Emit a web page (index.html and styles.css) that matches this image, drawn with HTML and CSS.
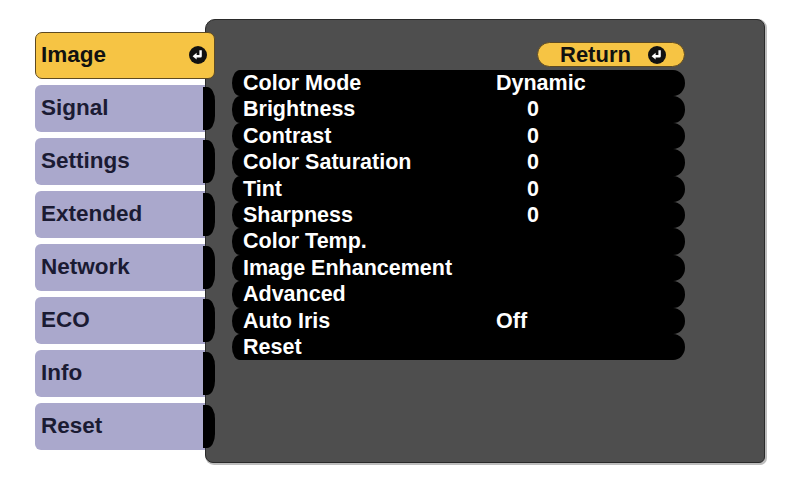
FILE: index.html
```html
<!DOCTYPE html>
<html lang="en">
<head>
<meta charset="utf-8">
<title>Image menu</title>
<link rel="stylesheet" href="styles.css">
</head>
<body>
<div class="screen">
  <nav class="tabs">
    <div class="tab active">
      <span>Image</span>
      <svg class="enter" viewBox="0 0 18 18" width="18" height="18" aria-hidden="true">
        <circle cx="9" cy="9" r="9" fill="#111"/>
        <path d="M11.6 4.2 V10.2 H7" fill="none" stroke="#fff" stroke-width="2.4" stroke-linejoin="round"/>
        <path d="M3.6 10.2 L7.6 6.8 L7.6 13.6 Z" fill="#fff"/>
      </svg>
    </div>
    <div class="tab">Signal</div>
    <div class="tab">Settings</div>
    <div class="tab">Extended</div>
    <div class="tab">Network</div>
    <div class="tab">ECO</div>
    <div class="tab">Info</div>
    <div class="tab">Reset</div>
  </nav>

  <section class="panel">
    <div class="menu">
      <div class="return">
        <span>Return</span>
        <svg class="enter" viewBox="0 0 18 18" width="18" height="18" aria-hidden="true">
          <circle cx="9" cy="9" r="9" fill="#111"/>
          <path d="M11.6 4.2 V10.2 H7" fill="none" stroke="#fff" stroke-width="2.4" stroke-linejoin="round"/>
          <path d="M3.6 10.2 L7.6 6.8 L7.6 13.6 Z" fill="#fff"/>
        </svg>
      </div>
      <ul class="rows">
        <li class="row"><span class="label">Color Mode</span><span class="value">Dynamic</span></li>
        <li class="row"><span class="label">Brightness</span><span class="value num">0</span></li>
        <li class="row"><span class="label">Contrast</span><span class="value num">0</span></li>
        <li class="row"><span class="label">Color Saturation</span><span class="value num">0</span></li>
        <li class="row"><span class="label">Tint</span><span class="value num">0</span></li>
        <li class="row"><span class="label">Sharpness</span><span class="value num">0</span></li>
        <li class="row"><span class="label">Color Temp.</span></li>
        <li class="row"><span class="label">Image Enhancement</span></li>
        <li class="row"><span class="label">Advanced</span></li>
        <li class="row"><span class="label">Auto Iris</span><span class="value">Off</span></li>
        <li class="row"><span class="label">Reset</span></li>
      </ul>
    </div>
  </section>
</div>
</body>
</html>
```
FILE: styles.css
```css
html, body {
  margin: 0;
  background: #fff;
}

body {
  width: 800px;
  height: 484px;
  overflow: hidden;
  font-family: "Liberation Sans", Arial, sans-serif;
  font-weight: bold;
  font-size: 21.5px;
}

.screen {
  display: flex;
  align-items: flex-start;
  padding: 19px 0 0 35px;
}

/* ---- left menu tabs ---- */
.tabs {
  display: flex;
  flex-direction: column;
  gap: 6.5px;
  width: 170px;
  margin-top: 13px;
  position: relative;
  z-index: 1;
}

.tab {
  position: relative;
  box-sizing: border-box;
  height: 46.5px;
  display: flex;
  align-items: center;
  padding-left: 6px;
  background: #aaa8cc;
  color: #1b1b33;
  font-size: 22.5px;
  border-radius: 6px 0 0 6px;
}

/* black bracket joining each tab to the panel edge */
.tab::after {
  content: "";
  position: absolute;
  top: 2px;
  bottom: 2px;
  left: 168px;
  width: 12px;
  background: #000;
  border-radius: 0 8px 8px 0 / 0 14px 14px 0;
}

.tab.active {
  width: 180px;
  padding: 0 7px 0 5px;
  justify-content: space-between;
  background: #f6c444;
  border: 1.5px solid #5e4a22;
  border-radius: 7px;
  color: #111;
}

.tab.active::after {
  display: none;
}

.enter {
  display: block;
  flex: none;
}

/* ---- main panel ---- */
.panel {
  box-sizing: border-box;
  width: 560px;
  height: 444px;
  padding: 22px 0 0 26px;
  background: #4e4e4e;
  border: 1px solid #2a2a2a;
  border-radius: 10px 8px 6px 8px;
  box-shadow: 1px 1px 0 1px #bdbdbd;
}

.menu {
  width: 453px;
  display: flex;
  flex-direction: column;
}

.return {
  align-self: flex-end;
  box-sizing: border-box;
  width: 148px;
  height: 25px;
  margin-bottom: 3px;
  padding-left: 22px;
  display: flex;
  align-items: center;
  gap: 17px;
  background: #f6c444;
  border: 1.5px solid #5e4a22;
  border-radius: 13px;
  color: #111;
  font-size: 22px;
  line-height: 1;
}

.rows {
  list-style: none;
  margin: 0;
  padding: 0;
}

.row {
  display: flex;
  align-items: center;
  height: 26.4px;
  line-height: 26.4px;
  padding-left: 11px;
  background: #000;
  color: #fff;
  border-radius: 8px 12px 12px 8px / 13.2px;
}

.label {
  width: 253px;
  flex: none;
}

.value.num {
  padding-left: 31px;
}
```
